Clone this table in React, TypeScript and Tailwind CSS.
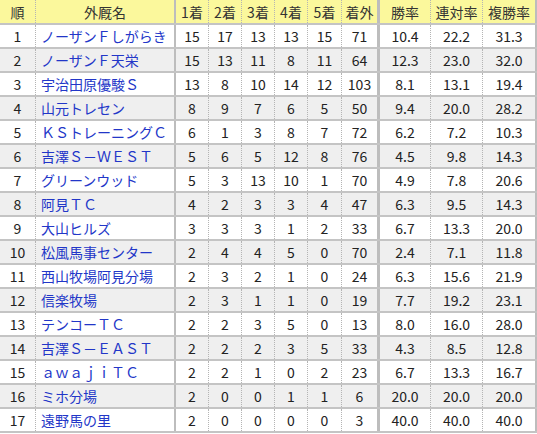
import React from 'react'

type Row = {
    rank: number
    name: string
    p: number[]
    win: string
    rentai: string
    fukusho: string
}

const rows: Row[] = [
    { rank: 1, name: 'ノーザンＦしがらき', p: [15, 17, 13, 13, 15, 71], win: '10.4', rentai: '22.2', fukusho: '31.3' },
    { rank: 2, name: 'ノーザンＦ天栄', p: [15, 13, 11, 8, 11, 64], win: '12.3', rentai: '23.0', fukusho: '32.0' },
    { rank: 3, name: '宇治田原優駿Ｓ', p: [13, 8, 10, 14, 12, 103], win: '8.1', rentai: '13.1', fukusho: '19.4' },
    { rank: 4, name: '山元トレセン', p: [8, 9, 7, 6, 5, 50], win: '9.4', rentai: '20.0', fukusho: '28.2' },
    { rank: 5, name: 'ＫＳトレーニングＣ', p: [6, 1, 3, 8, 7, 72], win: '6.2', rentai: '7.2', fukusho: '10.3' },
    { rank: 6, name: '吉澤Ｓ－ＷＥＳＴ', p: [5, 6, 5, 12, 8, 76], win: '4.5', rentai: '9.8', fukusho: '14.3' },
    { rank: 7, name: 'グリーンウッド', p: [5, 3, 13, 10, 1, 70], win: '4.9', rentai: '7.8', fukusho: '20.6' },
    { rank: 8, name: '阿見ＴＣ', p: [4, 2, 3, 3, 4, 47], win: '6.3', rentai: '9.5', fukusho: '14.3' },
    { rank: 9, name: '大山ヒルズ', p: [3, 3, 3, 1, 2, 33], win: '6.7', rentai: '13.3', fukusho: '20.0' },
    { rank: 10, name: '松風馬事センター', p: [2, 4, 4, 5, 0, 70], win: '2.4', rentai: '7.1', fukusho: '11.8' },
    { rank: 11, name: '西山牧場阿見分場', p: [2, 3, 2, 1, 0, 24], win: '6.3', rentai: '15.6', fukusho: '21.9' },
    { rank: 12, name: '信楽牧場', p: [2, 3, 1, 1, 0, 19], win: '7.7', rentai: '19.2', fukusho: '23.1' },
    { rank: 13, name: 'テンコーＴＣ', p: [2, 2, 3, 5, 0, 13], win: '8.0', rentai: '16.0', fukusho: '28.0' },
    { rank: 14, name: '吉澤Ｓ－ＥＡＳＴ', p: [2, 2, 2, 3, 5, 33], win: '4.3', rentai: '8.5', fukusho: '12.8' },
    { rank: 15, name: 'ａｗａｊｉＴＣ', p: [2, 2, 1, 0, 2, 23], win: '6.7', rentai: '13.3', fukusho: '16.7' },
    { rank: 16, name: 'ミホ分場', p: [2, 0, 0, 1, 1, 6], win: '20.0', rentai: '20.0', fukusho: '20.0' },
    { rank: 17, name: '遠野馬の里', p: [2, 0, 0, 0, 0, 3], win: '40.0', rentai: '40.0', fukusho: '40.0' },
]

// column classes: width + left border style
const cols = [
    'w-[35px]',
    'w-[139px] border-l border-dotted border-[#b4b4b4]',
    'w-[34px] border-l-2 border-solid border-[#bdbdbd]',
    'w-[33px] border-l border-dotted border-[#b4b4b4]',
    'w-[33px] border-l border-dotted border-[#b4b4b4]',
    'w-[33px] border-l border-dotted border-[#b4b4b4]',
    'w-[34px] border-l border-dotted border-[#b4b4b4]',
    'w-[36px] border-l border-dotted border-[#b4b4b4]',
    'w-[53px] border-l-[3px] border-solid border-[#bdbdbd]',
    'w-[52px] border-l border-dotted border-[#b4b4b4]',
    'w-[55px] border-l border-r-2 border-dotted border-[#b4b4b4] [border-right-style:solid] [border-right-color:#bdbdbd]',
]

const headers = ['順', '外厩名', '1着', '2着', '3着', '4着', '5着', '着外', '勝率', '連対率', '複勝率']

export default function App() {
    return (
        <div
            className="w-[537px] h-[434px] bg-white text-[14px] text-[#222] overflow-hidden"
            style={{ fontFamily: '"Noto Sans CJK JP", sans-serif' }}
        >
            <div className="border-b-2 border-[#c4c4c4]">
                <div className="flex h-[23px] bg-[#fbf89c] text-[#333]">
                    {headers.map((h, i) => (
                        <div key={h} className={`${cols[i]} shrink-0 flex items-center justify-center leading-none`}>
                            {h}
                        </div>
                    ))}
                </div>
                {rows.map((r, idx) => {
                    const cells = [String(r.rank), r.name, ...r.p.map(String), r.win, r.rentai, r.fukusho]
                    return (
                        <div
                            key={r.rank}
                            className={`flex h-[24px] border-t-2 border-[#c4c4c4] ${idx % 2 === 1 ? 'bg-[#efefef]' : 'bg-white'}`}
                        >
                            {cells.map((c, i) => (
                                <div
                                    key={i}
                                    className={`${cols[i]} shrink-0 flex items-center leading-none ${
                                        i === 1 ? 'justify-start pl-[5px] text-[#2236c8] whitespace-nowrap' : 'justify-center'
                                    }`}
                                >
                                    {c}
                                </div>
                            ))}
                        </div>
                    )
                })}
            </div>
        </div>
    )
}
